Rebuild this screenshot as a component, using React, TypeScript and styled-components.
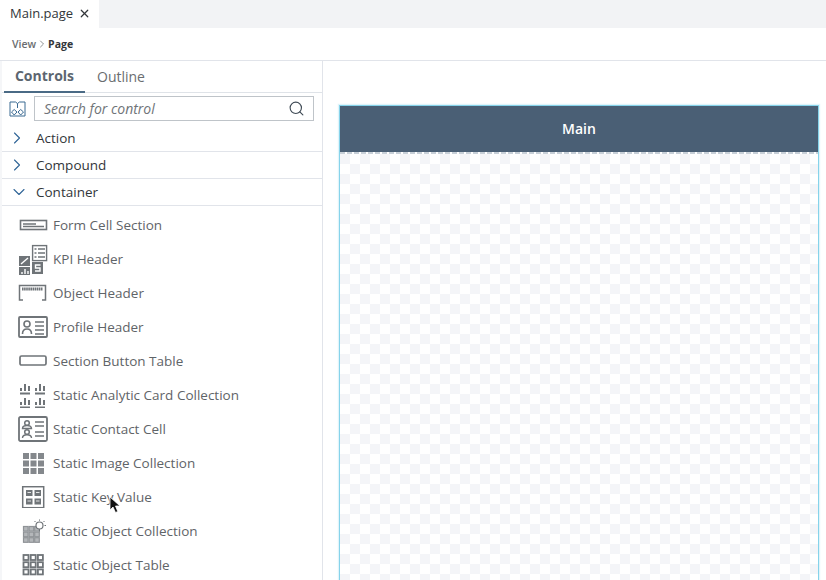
import React from "react";
import styled, { createGlobalStyle } from "styled-components";
import { ChevronDown, ChevronRight, Search, X } from "lucide-react";

const GlobalStyle = createGlobalStyle`
  html, body {
    margin: 0;
    padding: 0;
    background: #fff;
    overflow: hidden;
  }
  * { box-sizing: border-box; }
`;

const Page = styled.div`
  position: relative;
  width: 826px;
  height: 580px;
  overflow: hidden;
  display: flex;
  flex-direction: column;
  font-family: "Open Sans", "Liberation Sans", sans-serif;
  color: #32363a;
  background: #fff;
`;

const TabStrip = styled.div`
  height: 28px;
  background: #f2f3f5;
  display: flex;
  flex: none;
`;

const FileTab = styled.div`
  width: 99px;
  background: #fff;
  display: flex;
  align-items: center;
  padding: 0 0 2px 10px;
  gap: 5px;
  font-size: 13px;
  color: #32363a;
`;

const Breadcrumb = styled.div`
  height: 33px;
  flex: none;
  display: flex;
  align-items: center;
  padding: 0 0 1px 12px;
  font-size: 10.5px;
  font-weight: 600;
  color: #6a6d70;
  border-bottom: 1px solid #e1e4ea;
`;

const Current = styled.span`
  font-weight: 700;
  color: #32363a;
`;

const Body = styled.div`
  flex: 1;
  display: flex;
  min-height: 0;
`;

const Sidebar = styled.aside`
  width: 323px;
  flex: none;
  border-right: 1px solid #e1e4ea;
  border-left: 2px solid #f5f6f8;
  overflow: hidden;
`;

const PanelTabs = styled.div`
  height: 32px;
  display: flex;
  border-bottom: 1px solid #dfe3e8;
  padding-left: 2px;
`;

const PanelTab = styled.div<{ $active?: boolean }>`
  height: 32px;
  display: flex;
  align-items: center;
  justify-content: center;
  padding-bottom: 2px;
  width: ${(p) => (p.$active ? "81px" : "auto")};
  margin-left: ${(p) => (p.$active ? "0" : "12px")};
  font-size: 14px;
  font-weight: ${(p) => (p.$active ? 700 : 400)};
  color: ${(p) => (p.$active ? "#5c6670" : "#6a6d70")};
  border-bottom: ${(p) => (p.$active ? "2px solid #4a6a85" : "none")};
`;

const SearchRow = styled.div`
  height: 32px;
  display: flex;
  align-items: center;
  padding: 0 8px 2px 7px;
  gap: 8px;
`;

const SearchBox = styled.div`
  flex: 1;
  height: 25px;
  border: 1px solid #bfc4c9;
  display: flex;
  align-items: center;
  justify-content: space-between;
  padding: 0 8px 0 9px;
  font-size: 14px;
  font-style: italic;
  color: #6f7478;
`;

const GroupRow = styled.div`
  height: 27px;
  display: flex;
  align-items: center;
  border-bottom: 1px solid #e1e4ea;
  font-size: 13.5px;
  color: #32363a;
`;

const GroupIcon = styled.span<{ $open?: boolean }>`
  width: 34px;
  padding-left: ${(p) => (p.$open ? "7px" : "5px")};
  display: flex;
  align-items: center;
  color: #2f6497;
`;

const ItemList = styled.div`
  display: flex;
  flex-direction: column;
  padding-top: 2px;
`;

const Item = styled.div`
  height: 34px;
  display: flex;
  align-items: center;
  font-size: 13.5px;
  color: #5f6468;
`;

const ItemIcon = styled.span`
  width: 51px;
  padding: 0 4px 0 15px;
  flex: none;
  display: flex;
  align-items: center;
  justify-content: center;
  color: #6f7478;
`;

const Stage = styled.main`
  flex: 1;
  padding: 44px 7px 0 16px;
  min-width: 0;
`;

const Artboard = styled.section`
  width: 480px;
  height: 600px;
  border: 1px solid #86d3ea;
  box-shadow: 0 0 1px 1px rgba(134, 211, 234, 0.25);
  display: flex;
  flex-direction: column;
`;

const ArtboardHeader = styled.header`
  height: 46px;
  flex: none;
  background: #4a5f75;
  color: #fff;
  display: flex;
  align-items: center;
  justify-content: center;
  padding-bottom: 2px;
  font-size: 14px;
  font-weight: 600;
`;

const Dashes = styled.div`
  height: 2px;
  flex: none;
  background: repeating-linear-gradient(90deg, #c8d0d8 0 5px, #fff 5px 7px);
`;

const Checker = styled.div`
  flex: 1;
  background-color: #fff;
  background-image: conic-gradient(
    #fff 25%,
    #f4f5f8 0 50%,
    #fff 0 75%,
    #f4f5f8 0
  );
  background-size: 20px 20px;
`;

const Pointer = styled.svg`
  position: absolute;
  left: 109px;
  top: 496px;
`;

const Glyph = styled.svg`
  display: block;
  fill: none;
  stroke: currentColor;
`;

type IconProps = { w?: number; h?: number; children: React.ReactNode };

const Icon = ({ w = 30, h = 30, children }: IconProps) => (
  <Glyph width={w} height={h} viewBox={`0 0 ${w} ${h}`}>
    {children}
  </Glyph>
);

const BarGroup = ({ x, y }: { x: number; y: number }) => (
  <g strokeWidth="2">
    <path d={`M${x + 1} ${y + 8}v-3M${x + 5} ${y + 8}v-7M${x + 9} ${y + 8}v-5`} />
    <path d={`M${x} ${y + 10.5}h10`} />
  </g>
);

const FormCellIcon = () => (
  <Icon w={30} h={14}>
    <rect x="2.5" y="2.5" width="26" height="9" strokeWidth="1.6" />
    <path d="M5 6h13M5 8.500h21" strokeWidth="1.300" />
  </Icon>
);

const KpiIcon = () => (
  <Icon w={30} h={32}>
    <rect x="14.600" y="2.600" width="14" height="15" strokeWidth="1.400" />
    <path d="M20 6h7M20 10h7M20 14h7M16.500 6h2M16.500 10h2M16.500 14h2" strokeWidth="1.600" />
    <rect x="1" y="13" width="11" height="10" fill="currentColor" stroke="none" />
    <path d="M3 21l7-6" stroke="#fff" strokeWidth="1.400" />
    <rect x="1" y="24" width="11" height="8" fill="currentColor" stroke="none" />
    <path d="M4 31v-2M7 31v-5M10 31v-3" stroke="#fff" strokeWidth="1.400" />
    <rect x="14" y="19" width="11" height="12" fill="currentColor" stroke="none" />
    <path d="M22.500 22h-5v3h4.500v3h-5" stroke="#fff" strokeWidth="1.400" />
  </Icon>
);

const ObjectHeaderIcon = () => (
  <Icon w={30} h={18}>
    <path d="M5 16H1.500V1.500h26V16H24" strokeWidth="1.500" />
    <path d="M4 5h21" strokeWidth="3" strokeDasharray="1.600 0.500" />
  </Icon>
);

const ProfileIcon = () => (
  <Icon w={30} h={22}>
    <rect x="1" y="1" width="28" height="20" rx="1" strokeWidth="1.800" />
    <circle cx="9" cy="8" r="3" strokeWidth="1.600" />
    <path d="M4.500 18c0-3.500 1.500-5 4.500-5s4.500 1.500 4.500 5" strokeWidth="1.600" />
    <path d="M17 6h9M17 10h9M17 14h9M17 18h9" strokeWidth="1.400" />
  </Icon>
);

const SectionIcon = () => (
  <Icon w={30} h={12}>
    <rect x="2" y="1" width="26" height="9" rx="1.500" strokeWidth="1.700" />
  </Icon>
);

const AnalyticIcon = () => (
  <Icon w={30} h={26}>
    <BarGroup x={2} y={1} />
    <BarGroup x={17} y={1} />
    <BarGroup x={2} y={15} />
    <BarGroup x={17} y={15} />
  </Icon>
);

const ContactIcon = () => (
  <Icon w={30} h={26}>
    <rect x="1" y="1" width="28" height="24" rx="1.500" strokeWidth="1.800" />
    <circle cx="9" cy="7" r="2.300" strokeWidth="1.500" />
    <path d="M4.500 12.500c0-1.800 1.500-3 4.500-3s4.500 1.200 4.500 3z" strokeWidth="1.400" />
    <circle cx="9" cy="16" r="2.300" strokeWidth="1.500" />
    <path d="M4.500 22c0-2 1.500-3.200 4.500-3.200s4.500 1.200 4.500 3.200" strokeWidth="1.400" />
    <path d="M17 6h9M17 10h9M17 16h9M17 20h9" strokeWidth="1.400" />
  </Icon>
);

const grid = (cols: number, rows: number, x0: number, y0: number, size: number, gap: number) => {
  const out: { key: string; x: number; y: number }[] = [];
  for (let r = 0; r < rows; r++) {
    for (let c = 0; c < cols; c++) {
      out.push({ key: `${r}-${c}`, x: x0 + c * (size + gap), y: y0 + r * (size + gap) });
    }
  }
  return out;
};

const ImageGridIcon = () => (
  <Icon w={30} h={22}>
    {grid(3, 3, 5, 1, 6, 1.500).map((t) => (
      <rect key={t.key} x={t.x} y={t.y} width={6} height={6} fill="#84888c" stroke="none" />
    ))}
  </Icon>
);

const KeyValueIcon = () => (
  <Icon w={30} h={22}>
    <rect x="4.700" y="0.700" width="21" height="21" strokeWidth="1.500" />
    {grid(2, 2, 8, 4, 6.500, 2).map((t) => (
      <rect key={t.key} x={t.x} y={t.y} width={6.500} height={6} fill="currentColor" stroke="none" />
    ))}
    <path d="M9.500 6.500h3.500M18 6.500h3.500M9.500 15h3.500M18 15h3.500" stroke="#fff" strokeWidth="0.800" />
  </Icon>
);

const CollectionIcon = () => (
  <Icon w={30} h={24}>
    <g stroke="#8f9397" strokeWidth="1.200">
      {grid(3, 3, 5.500, 7.500, 4.600, 1).map((t) => (
        <rect key={t.key} x={t.x} y={t.y} width={4.600} height={4.600} fill="#b4b7ba" />
      ))}
    </g>
    <circle cx="21.500" cy="6.500" r="3.500" fill="#fff" strokeWidth="1.200" />
    <path d="M21.500 10v2.500M21.500 0.500v1.200M26.500 2l-1 1M16.500 2l1 1M28 6.500h-1.500" strokeWidth="1" />
  </Icon>
);

const TableIcon = () => (
  <Icon w={30} h={22}>
    {grid(3, 3, 5.500, 1, 5, 2.200).map((t) => (
      <rect key={t.key} x={t.x} y={t.y} width={5} height={5} strokeWidth="1.800" />
    ))}
  </Icon>
);

const CatalogIcon = () => (
  <Icon w={17} h={17}>
    <g stroke="#3b6a92" strokeWidth="1">
      <path d="M1 2h5.500L8.500 3.500 10.500 2H16v14H1z" />
      <path d="M8.500 3.500V8M2.500 12l2.700-2.500L8 12l-2.800 3zM9 12l2.700-2.500L14.500 12l-2.800 3z" />
    </g>
  </Icon>
);

const items: { label: string; icon: React.ReactNode }[] = [
  { label: "Form Cell Section", icon: <FormCellIcon /> },
  { label: "KPI Header", icon: <KpiIcon /> },
  { label: "Object Header", icon: <ObjectHeaderIcon /> },
  { label: "Profile Header", icon: <ProfileIcon /> },
  { label: "Section Button Table", icon: <SectionIcon /> },
  { label: "Static Analytic Card Collection", icon: <AnalyticIcon /> },
  { label: "Static Contact Cell", icon: <ContactIcon /> },
  { label: "Static Image Collection", icon: <ImageGridIcon /> },
  { label: "Static Key Value", icon: <KeyValueIcon /> },
  { label: "Static Object Collection", icon: <CollectionIcon /> },
  { label: "Static Object Table", icon: <TableIcon /> },
];

const App: React.FC = () => (
  <Page>
    <GlobalStyle />
    <TabStrip>
      <FileTab>
        Main.page
        <X size={13} strokeWidth={2.2} color="#32363a" />
      </FileTab>
    </TabStrip>
    <Breadcrumb>
      View
      <ChevronRight size={12} strokeWidth={1.5} />
      <Current>Page</Current>
    </Breadcrumb>
    <Body>
      <Sidebar>
        <PanelTabs>
          <PanelTab $active>Controls</PanelTab>
          <PanelTab>Outline</PanelTab>
        </PanelTabs>
        <SearchRow>
          <CatalogIcon />
          <SearchBox>
            Search for control
            <Search size={17} strokeWidth={1.6} color="#3f4a55" />
          </SearchBox>
        </SearchRow>
        <GroupRow>
          <GroupIcon>
            <ChevronRight size={20} strokeWidth={1.3} />
          </GroupIcon>
          Action
        </GroupRow>
        <GroupRow>
          <GroupIcon>
            <ChevronRight size={20} strokeWidth={1.3} />
          </GroupIcon>
          Compound
        </GroupRow>
        <GroupRow>
          <GroupIcon $open>
            <ChevronDown size={20} strokeWidth={1.3} />
          </GroupIcon>
          Container
        </GroupRow>
        <ItemList>
          {items.map((item) => (
            <Item key={item.label}>
              <ItemIcon>{item.icon}</ItemIcon>
              {item.label}
            </Item>
          ))}
        </ItemList>
      </Sidebar>
      <Stage>
        <Artboard>
          <ArtboardHeader>Main</ArtboardHeader>
          <Dashes />
          <Checker />
        </Artboard>
      </Stage>
    </Body>
    <Pointer width="12" height="18" viewBox="0 0 12 18">
      <path d="M1 1v13l3-3 2.500 5.500 2.300-1L6.500 10H11z" fill="#111" stroke="#fff" strokeWidth="0.800" />
    </Pointer>
  </Page>
);

export default App;
